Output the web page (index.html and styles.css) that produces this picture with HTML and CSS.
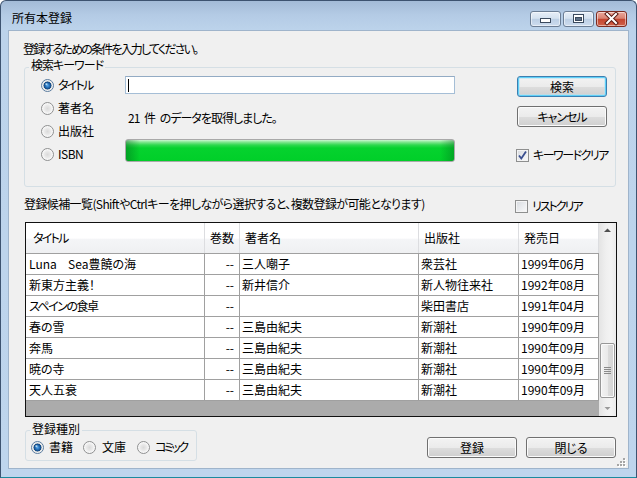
FILE: index.html
```html
<!DOCTYPE html>
<html lang="ja">
<head>
<meta charset="utf-8">
<title>所有本登録</title>
<link rel="stylesheet" href="styles.css">
</head>
<body>
<div class="window">
  <div class="titlebar">
    <span class="title">所有本登録</span>
    <div class="caption">
      <div class="cbtn">
        <svg width="31" height="16" viewBox="0 0 31 16"><rect x="10.5" y="7.5" width="10" height="4" fill="#fff" stroke="#3b4a5e" stroke-width="1"/></svg>
      </div>
      <div class="cbtn">
        <svg width="31" height="16" viewBox="0 0 31 16"><rect x="10.5" y="3.5" width="10" height="8" fill="#fff" stroke="#3b4a5e" stroke-width="1"/><rect x="12.5" y="6.5" width="6" height="3" fill="#5c6f86" stroke="#3b4a5e" stroke-width="1"/></svg>
      </div>
      <div class="cbtn close">
        <svg width="31" height="16" viewBox="0 0 31 16"><path d="M11 3 L20 12 M20 3 L11 12" stroke="#5a1a12" stroke-width="4" stroke-linecap="square"/><path d="M11 3 L20 12 M20 3 L11 12" stroke="#fff" stroke-width="2" stroke-linecap="square"/></svg>
      </div>
    </div>
  </div>

  <div class="client">
    <p class="instr">登録するための条件を入力してください。</p>

    <fieldset class="group search">
      <legend class="ls1">検索キーワード</legend>
      <div class="search-body">
        <div class="radios">
          <div class="opt"><span class="radio on"></span><span class="ls17">タイトル</span></div>
          <div class="opt"><span class="radio"></span><span>著者名</span></div>
          <div class="opt"><span class="radio"></span><span>出版社</span></div>
          <div class="opt"><span class="radio"></span><span class="isbn">ISBN</span></div>
        </div>
        <div class="middle">
          <div class="textbox"><span class="caret"></span></div>
          <div class="status">21 件 のデータを取得しました。</div>
          <div class="progress"></div>
        </div>
        <div class="side">
          <div class="btn default">検索</div>
          <div class="btn ls1">キャンセル</div>
          <div class="chk-row kw">
            <span class="check on"><svg width="11" height="11" viewBox="0 0 11 11"><path d="M2 5.5 L4.3 8.5 L9 1.5" fill="none" stroke="#3a4f8f" stroke-width="1.8"/></svg></span>
            <span class="ls15">キーワードクリア</span>
          </div>
        </div>
      </div>
    </fieldset>

    <div class="list-head">
      <span class="list-label">登録候補一覧(ShiftやCtrlキーを押しながら選択すると、複数登録が可能となります)</span>
      <div class="chk-row listclear">
        <span class="check"></span>
        <span class="ls2">リストクリア</span>
      </div>
    </div>

    <div class="grid">
      <div class="grid-main">
        <div class="ghead">
          <div class="c1 ls17">タイトル</div>
          <div>巻数</div>
          <div>著者名</div>
          <div>出版社</div>
          <div>発売日</div>
        </div>
        <div class="grows">
          <div class="grow"><div class="c1 pre luna">Luna  Sea豊饒の海</div><div class="c2">--</div><div>三人嘲子</div><div>衆芸社</div><div>1999年06月</div></div>
          <div class="grow"><div class="c1">新東方主義！</div><div class="c2">--</div><div>新井信介</div><div>新人物往来社</div><div>1992年08月</div></div>
          <div class="grow"><div class="c1 ls15">スペインの食卓</div><div class="c2">--</div><div></div><div>柴田書店</div><div>1991年04月</div></div>
          <div class="grow"><div class="c1">春の雪</div><div class="c2">--</div><div>三島由紀夫</div><div>新潮社</div><div>1990年09月</div></div>
          <div class="grow"><div class="c1">奔馬</div><div class="c2">--</div><div>三島由紀夫</div><div>新潮社</div><div>1990年09月</div></div>
          <div class="grow"><div class="c1">暁の寺</div><div class="c2">--</div><div>三島由紀夫</div><div>新潮社</div><div>1990年09月</div></div>
          <div class="grow"><div class="c1">天人五衰</div><div class="c2">--</div><div>三島由紀夫</div><div>新潮社</div><div>1990年09月</div></div>
        </div>
        <div class="gfill"></div>
      </div>
      <div class="vscroll">
        <div class="sbtn"><svg width="17" height="17" viewBox="0 0 17 17"><path d="M5 9 L8.5 5.5 L12 9 Z" fill="#505050"/></svg></div>
        <div class="track">
          <div class="thumb"><svg width="7" height="7" viewBox="0 0 7 7"><path d="M0 0.5 H7 M0 2.5 H7 M0 4.5 H7 M0 6.5 H7" stroke="#8a8a8a" stroke-width="1"/></svg></div>
        </div>
        <div class="sbtn"><svg width="17" height="17" viewBox="0 0 17 17"><path d="M5.5 8 L8.5 11 L11.5 8 Z" fill="#9a9a9a"/></svg></div>
      </div>
    </div>

    <div class="bottom">
      <fieldset class="group kind">
        <legend>登録種別</legend>
        <div class="kind-body">
          <span class="radio on"></span><span class="klabel">書籍</span>
          <span class="radio r2"></span><span class="klabel">文庫</span>
          <span class="radio r3"></span><span class="klabel ls25">コミック</span>
        </div>
      </fieldset>
      <div class="bottom-buttons">
        <div class="btn">登録</div>
        <div class="btn">閉じる</div>
      </div>
    </div>

    <svg class="grip" width="10" height="10" viewBox="0 0 10 10">
      <g fill="#fff"><rect x="8" y="2" width="2" height="2"/><rect x="5" y="5" width="2" height="2"/><rect x="8" y="5" width="2" height="2"/><rect x="2" y="8" width="2" height="2"/><rect x="5" y="8" width="2" height="2"/><rect x="8" y="8" width="2" height="2"/></g>
      <g fill="#a6a6a6"><rect x="7" y="1" width="2" height="2"/><rect x="4" y="4" width="2" height="2"/><rect x="7" y="4" width="2" height="2"/><rect x="1" y="7" width="2" height="2"/><rect x="4" y="7" width="2" height="2"/><rect x="7" y="7" width="2" height="2"/></g>
    </svg>
  </div>
</div>
</body>
</html>
```

FILE: styles.css
```css
* { box-sizing: border-box; }

html, body {
  margin: 0;
  padding: 0;
}

body {
  width: 637px;
  height: 478px;
  overflow: hidden;
  background: #ffffff;
  font-family: "Noto Sans CJK JP", "Noto Sans", sans-serif;
  font-size: 12px;
  line-height: 14px;
  color: #000;
  font-feature-settings: "palt";
}

/* letter-spacing helpers to mimic the narrow proportional kana of the UI font */
.ls1 { letter-spacing: -1px; }
.ls15 { letter-spacing: -1.5px; }
.ls17 { letter-spacing: -1.7px; }
.ls2 { letter-spacing: -2px; }
.ls25 { letter-spacing: -2.5px; }
.pre { white-space: pre; }

.window {
  width: 637px;
  height: 478px;
  border: 1px solid #3d5370;
  border-bottom-color: #1b8a9e;
  border-radius: 6px 6px 0 0;
  background: linear-gradient(to bottom, #a3bbd7 0, #b4cbe5 14px, #bcd3eb 29px, #bed5ed 100%);
  display: flex;
  flex-direction: column;
}

/* title bar */
.titlebar {
  height: 29px;
  flex: none;
  display: flex;
  justify-content: space-between;
  align-items: flex-start;
  padding: 10px 9px 0 11px;
}

.title {
  color: #000;
}

.caption {
  display: flex;
  gap: 2px;
}

.cbtn {
  width: 31px;
  height: 16px;
  border: 1px solid #6b7d94;
  border-radius: 3px;
  background: linear-gradient(to bottom, #e6eef8 0, #d5e2f0 45%, #bccfe5 52%, #cddcee 100%);
  box-shadow: inset 0 0 0 1px rgba(255, 255, 255, 0.5);
  display: flex;
  align-items: center;
  justify-content: center;
  overflow: hidden;
}

.cbtn svg {
  display: block;
  flex: none;
}

.cbtn.close {
  border-color: #7d2b20;
  background: linear-gradient(to bottom, #eba99c 0, #da8271 45%, #c4452f 52%, #d0624b 100%);
}

/* client area */
.client {
  position: relative;
  height: 439px;
  flex: none;
  margin: 0 7px;
  background: #f0f0f0;
  border: 1px solid #9fb4cb;
  padding: 11px 12px 0 14px;
  overflow: hidden;
}

.instr {
  margin: 0 0 2px 0;
  letter-spacing: -1.8px;
}

.group {
  margin: 0;
  padding: 0;
  border: 1px solid #d5dfe5;
  border-radius: 3px;
  min-inline-size: 0;
}

.group legend {
  margin-left: 4px;
  padding: 0 2px 4px 2px;
  line-height: 14px;
}

.search {
  margin-left: 1px;
  padding-bottom: 23px;
}

.search-body {
  display: flex;
  padding-left: 16px;
}

.radios {
  width: 84px;
  display: flex;
  flex-direction: column;
  gap: 5px;
}

.opt {
  height: 18px;
  display: flex;
  align-items: center;
  white-space: nowrap;
}

.isbn {
  letter-spacing: -0.5px;
}

.radio {
  flex: none;
  width: 13px;
  height: 13px;
  border-radius: 50%;
  border: 1px solid #8f9091;
  background: radial-gradient(circle at 50% 50%, #dadada 0, #e9e9e9 3px, #f7f7f7 5px, #ffffff 6px);
  margin-right: 4px;
}

.radio.on {
  border-color: #5b7c9e;
  background:
    radial-gradient(circle at 40% 38%, rgba(220, 245, 255, 0.95) 0, rgba(220, 245, 255, 0) 1.6px),
    radial-gradient(circle at 50% 50%, #5aa6e6 0, #2f7dc6 1.6px, #154f8e 3.2px, #1d4f80 3.8px, #dcdcdc 4.2px, #efefef 5px, #ffffff 6px);
}

.middle {
  width: 330px;
  flex: none;
}

.textbox {
  height: 18px;
  border: 1px solid #a5bed6;
  border-top-color: #93abc4;
  background: #fff;
}

.caret {
  display: block;
  width: 1px;
  height: 13px;
  margin: 2px 0 0 2px;
  background: #000;
}

.status {
  margin-top: 17px;
  padding-left: 3px;
  letter-spacing: -1px;
  word-spacing: 3px;
  white-space: nowrap;
}

.progress {
  margin-top: 14px;
  height: 23px;
  border: 1px solid #a9a9a9;
  border-radius: 3px;
  background:
    linear-gradient(to right, rgba(0, 90, 25, 0.4) 0, rgba(0, 90, 25, 0) 14px, rgba(0, 90, 25, 0) calc(100% - 14px), rgba(0, 90, 25, 0.35) 100%),
    linear-gradient(to bottom, #cdf6d2 0, #86e793 2px, #2fd84e 5px, #06d22e 8px, #00cf29 100%);
}

.side {
  margin-left: 62px;
  width: 90px;
  flex: none;
  display: flex;
  flex-direction: column;
}

.btn {
  width: 90px;
  height: 21px;
  flex: none;
  border: 1px solid #707070;
  border-radius: 3px;
  background: linear-gradient(to bottom, #f3f3f3 0, #ebebeb 50%, #dddddd 52%, #cfcfcf 100%);
  box-shadow: inset 0 0 0 1px #fbfbfb;
  text-align: center;
  line-height: 19px;
  white-space: nowrap;
}

.btn.default {
  border-color: #3c7fb1;
  box-shadow: inset 0 0 0 1px #5fd0f8, inset 0 0 0 2px rgba(175, 225, 245, 0.5);
}

.side .btn + .btn {
  margin-top: 9px;
}

.chk-row {
  display: flex;
  align-items: center;
  height: 14px;
  white-space: nowrap;
}

.check {
  flex: none;
  width: 13px;
  height: 13px;
  border: 1px solid #8e8f8f;
  background: linear-gradient(135deg, #d6d9de 0, #e9ebee 50%, #fafafa 100%);
  box-shadow: inset 0 0 0 1px #f4f4f4;
  margin-right: 4px;
  display: flex;
  align-items: center;
  justify-content: center;
}

.check svg {
  display: block;
}

.kw {
  margin-top: 21px;
  margin-left: -1px;
}

/* list header */
.list-head {
  display: flex;
  align-items: flex-start;
  margin-top: 10px;
  height: 16px;
}

.list-label {
  padding-left: 1px;
  letter-spacing: -0.6px;
  white-space: nowrap;
}

.listclear {
  margin-left: auto;
  margin-top: 2px;
  width: 101px;
  flex: none;
}

/* data grid */
.grid {
  margin-top: 9px;
  margin-left: 2px;
  width: 592px;
  height: 195px;
  border: 1px solid #111;
  display: flex;
}

.grid-main {
  width: 573px;
  flex: none;
  display: flex;
  flex-direction: column;
}

.ghead,
.grow {
  display: grid;
  grid-template-columns: 179px 35px 179px 100px 80px;
}

.ghead {
  height: 30px;
  flex: none;
  background: linear-gradient(to bottom, #ffffff 0, #ffffff 50%, #f4f5f7 55%, #eff0f2 100%);
}

.ghead > div {
  border-right: 1px solid #dcdde0;
  padding-left: 5px;
  line-height: 30px;
  white-space: nowrap;
}

.ghead > .c1 {
  padding-left: 7px;
}

.grows {
  flex: none;
  border-top: 1px solid #a0a0a0;
}

.grow {
  height: 21px;
  border-bottom: 1px solid #a0a0a0;
  background: #fff;
}

.grow > div {
  border-right: 1px solid #a0a0a0;
  padding-left: 2px;
  line-height: 20px;
  white-space: nowrap;
  overflow: hidden;
}

.grow > .c1 {
  padding-left: 3px;
}

.grow > .c1.pre {
  white-space: pre;
}

.grow > .luna {
  word-spacing: 3px;
}

.grow > .c2 {
  text-align: right;
  padding-right: 5px;
}

.gfill {
  flex: 1;
  background: #ababab;
}

.vscroll {
  width: 17px;
  flex: none;
  display: flex;
  flex-direction: column;
  background: linear-gradient(to right, #e4e4e4 0, #efefef 40%, #f3f3f3 70%, #ebebeb 100%);
}

.sbtn {
  height: 17px;
  flex: none;
}

.sbtn svg {
  display: block;
}

.track {
  flex: 1;
  display: flex;
  flex-direction: column;
}

.thumb {
  margin-top: auto;
  margin-bottom: 1px;
  margin-left: 1px;
  width: 15px;
  height: 55px;
  border: 1px solid #979797;
  border-radius: 2px;
  background: linear-gradient(to right, #f2f2f2 0, #eaeaea 50%, #dcdcdc 51%, #d4d4d4 100%);
  box-shadow: inset 0 0 0 1px #fafafa;
  display: flex;
  align-items: center;
  justify-content: center;
}

.thumb svg {
  display: block;
}

/* bottom */
.bottom {
  display: flex;
  justify-content: space-between;
  align-items: flex-start;
}

.kind {
  margin-top: 5px;
  margin-left: 2px;
  width: 172px;
  flex: none;
  padding-bottom: 4px;
}

.kind legend {
  padding-bottom: 2px;
}

.kind-body {
  height: 18px;
  display: flex;
  align-items: center;
  padding-left: 5px;
  white-space: nowrap;
}

.klabel {
  flex: none;
}

.kind-body .radio {
  margin-right: 5px;
}

.kind-body .r2 {
  margin-left: 10px;
  margin-right: 6px;
}

.kind-body .r3 {
  margin-left: 11px;
}

.bottom-buttons {
  margin-top: 20px;
  display: flex;
  gap: 9px;
}

.grip {
  position: absolute;
  right: 2px;
  bottom: 1px;
}
```
